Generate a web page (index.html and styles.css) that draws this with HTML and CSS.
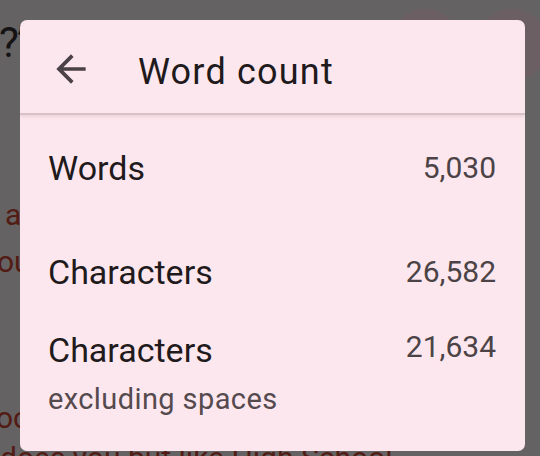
FILE: index.html
```html
<!DOCTYPE html>
<html lang="en">
<head>
<meta charset="utf-8">
<title>Word count</title>
<link rel="stylesheet" href="styles.css">
</head>
<body>
<div class="page">
  <div class="appbar">
    <span class="q">?”</span>
    <span class="spacer"></span>
    <span class="circle"></span>
    <span class="circle circle-2"></span>
  </div>
  <div class="doc">
    <p class="para para-1"><span class="line line-a">a</span><span class="line line-b">ou</span></p>
    <p class="para para-2"><span class="line line-c">oc</span><span class="line line-d">does you but like High School</span></p>
  </div>

  <div class="dialog" role="dialog" aria-label="Word count">
    <div class="dialog-header">
      <svg class="back" viewBox="0 0 24 24" width="44" height="44" aria-hidden="true">
        <path d="M20 11H7.83l5.59-5.59L12 4l-8 8 8 8 1.41-1.41L7.83 13H20v-2z"/>
      </svg>
      <h1 class="title">Word count</h1>
    </div>
    <div class="dialog-body">
      <div class="row row-1">
        <div class="label">Words</div>
        <div class="value">5,030</div>
      </div>
      <div class="row row-2">
        <div class="label">Characters</div>
        <div class="value">26,582</div>
      </div>
      <div class="row row-3">
        <div class="label-block">
          <div class="label">Characters</div>
          <div class="sub">excluding spaces</div>
        </div>
        <div class="value value-top">21,634</div>
      </div>
    </div>
  </div>
</div>
</body>
</html>
```

FILE: styles.css
```css
* { box-sizing: border-box; }

html, body {
  margin: 0;
  padding: 0;
}

body {
  background: #656263;
  font-family: Roboto, "Noto Sans", "Liberation Sans", sans-serif;
}

.page {
  position: relative;
  width: 540px;
  height: 456px;
  overflow: hidden;
}

/* ---------- dimmed document behind the dialog ---------- */
.appbar {
  display: flex;
  align-items: flex-start;
  height: 90px;
}

.q {
  font-size: 42px;
  line-height: 1;
  color: #141213;
  margin-top: 22px;
  margin-left: -1px;
  letter-spacing: -2px;
}

.spacer { flex: 1; }

.circle {
  width: 72px;
  height: 72px;
  border-radius: 50%;
  background: #6c5f63;
  margin-top: 9px;
  margin-right: 15px;
  flex: none;
}

.circle-2 {
  margin-right: -8px;
}

.doc {
  color: #521b14;
  font-size: 30px;
}

.para {
  margin: 0;
  white-space: nowrap;
}

.line { display: block; }

.para-1 {
  margin-top: 101px;
  line-height: 47px;
}

.line-a { padding-left: 5px; }
.line-b { text-indent: -3px; }

.para-2 {
  margin-top: 113px;
  line-height: 40px;
}

.line-c { text-indent: -4px; }
.line-d { text-indent: 0; }

/* ---------- dialog ---------- */
.dialog {
  position: absolute;
  left: 20px;
  top: 20px;
  width: 505px;
  height: 431px;
  background: #fde7ee;
  border-radius: 7px;
  overflow: hidden;
}

.dialog-header {
  display: flex;
  align-items: flex-start;
  height: 95px;
  padding: 27px 0 0 29px;
  border-bottom: 2px solid #d8c2c8;
  box-shadow: 0 2px 3px rgba(120, 80, 90, 0.12);
}

.back {
  flex: none;
  fill: #4a4246;
}

.title {
  margin: 3px 0 0 45px;
  font-size: 36px;
  line-height: 44px;
  font-weight: 400;
  letter-spacing: 1.2px;
  color: #1f1a1c;
}

.dialog-body {
  padding: 0 29px 0 28px;
}

.row {
  display: flex;
  justify-content: space-between;
  align-items: flex-start;
}

.row-1 { margin-top: 33px; }
.row-2 { margin-top: 64px; }
.row-3 { margin-top: 38px; }

.label {
  font-size: 34px;
  line-height: 40px;
  color: #1f1a1c;
}

.sub {
  margin-top: 11px;
  font-size: 29px;
  line-height: 36px;
  letter-spacing: 0.4px;
  color: #554a4e;
}

.value {
  font-size: 30px;
  line-height: 40px;
  color: #4b4346;
}

.value-top { margin-top: -3px; }
```
